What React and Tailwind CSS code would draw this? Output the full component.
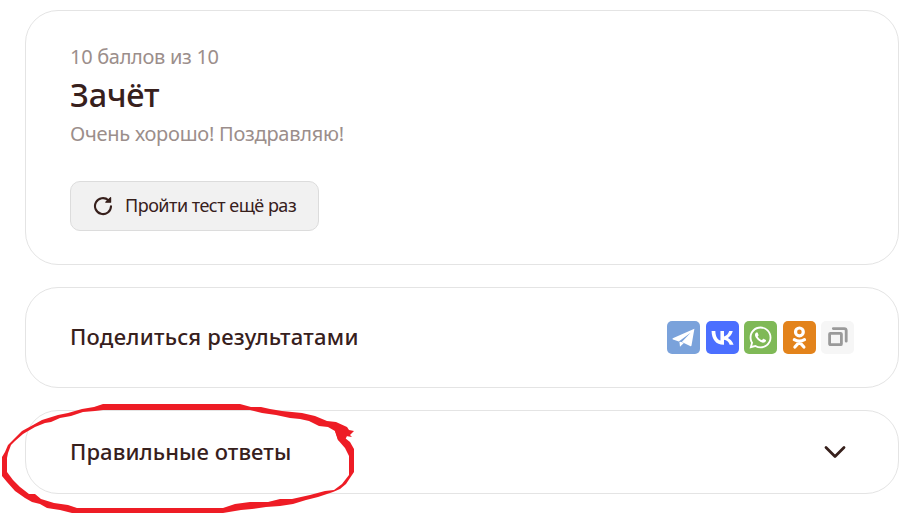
import React from 'react';
import { FaWhatsapp } from 'react-icons/fa';

const TelegramIcon = () => (
    <svg width="33" height="33" viewBox="0 0 33 33" fill="currentColor">
        <path d="M27.4 7.8 5.8 17.2q-.9.8.2 1.3l5.8 2L23.6 11.8l-8.8 9.2 8.8 4.2q.7.2.9-.6z" />
        <path d="M12.4 20.8 13 25.7l3.8-3.6-2.4-1.2z" />
    </svg>
);

const VkIcon = () => (
    <svg width="33" height="33" viewBox="0 0 24 24" fill="currentColor">
        <path d="M12.77 17.29c-5.47 0-8.59-3.75-8.72-9.99h2.74c.09 4.58 2.11 6.52 3.71 6.92V7.3h2.58v3.95c1.58-.17 3.24-1.97 3.8-3.95h2.58c-.43 2.44-2.23 4.24-3.51 4.98 1.28.6 3.33 2.17 4.11 5.01h-2.84c-.61-1.9-2.13-3.37-4.14-3.57v3.57h-.31z" />
    </svg>
);

const OkIcon = () => (
    <svg width="33" height="33" viewBox="0 0 33 33" fill="none" stroke="currentColor" strokeWidth="3.2" strokeLinecap="round">
        <circle cx="16.4" cy="10.9" r="3.9" />
        <path d="M11.3 18.7q5.1 3 10.2 0M16.4 21l-4.5 5M16.4 21l4.5 5" />
    </svg>
);

const CopyIcon = () => (
    <svg width="33" height="33" viewBox="0 0 33 33" fill="none" stroke="currentColor" strokeWidth="2.8">
        <rect x="8.6" y="12.3" width="11.8" height="11.4" rx="0.8" />
        <path d="M12.3 7.6h10.9a2 2 0 0 1 2 2v10.6" strokeLinecap="round" />
    </svg>
);

const RetryIcon = () => (
    <svg width="20" height="20" viewBox="0 0 20 20" fill="none" stroke="currentColor" strokeWidth="2.1">
        <path d="M18 10.2a8 8 0 1 1-2.6-6" strokeLinecap="round" />
        <path d="M17.6 1.6v4.6h-4.8z" fill="currentColor" strokeWidth="1.2" strokeLinejoin="round" />
    </svg>
);

const shareLinks = [
    { name: 'Telegram', color: 'bg-[#7aa2db]', icon: <TelegramIcon /> },
    { name: 'ВКонтакте', color: 'bg-[#4b6fff]', icon: <VkIcon /> },
    { name: 'WhatsApp', color: 'bg-[#7fb957]', icon: <FaWhatsapp size={25} /> },
    { name: 'Одноклассники', color: 'bg-[#e3831b]', icon: <OkIcon /> },
];

const Card = ({ className, children }) => (
    <section className={`w-[874px] rounded-[33px] border border-[#e4e4e4] bg-white px-11 ${className}`}>
        {children}
    </section>
);

// Hand-drawn red marker around the answers heading
const MarkerCircle = () => (
    <svg className="pointer-events-none absolute left-0 top-0" width="923" height="524" viewBox="0 0 923 524">
        <path
            fill="#ee1c25"
            fillRule="evenodd"
            d="M103 404H240L251 407L261 407L270 409L282 411L302 413L315 416L327 421L336 422L347 427L349 430L354 431L350 435L352 437L346 436L343 434L345 438L350 442L354 449V472L350 478L346 484L340 489L333 492L318 497L306 500L293 504L280 506L266 507L252 509L241 510L223 513H72L60 510L47 508L40 504L32 502L25 498L15 491L7 482L2 476V457L5 452L8 445L14 439L22 431L33 425L42 420L58 415L68 413L82 409L94 407Z
            M103 410L95 411L83 412L71 416L60 418L51 422L45 423L35 427L23 434L15 441L11 445L8 453L7 458V472L13 480L20 487L29 494L35 494L41 499L54 503L68 505L77 508H223L235 504L250 502L268 502L280 499L292 499L310 495L325 491L334 490L342 484L349 475V456L345 448L338 440L335 431L328 427L319 426L309 421L300 419L290 418L276 415L262 413L250 410Z"
        />
        <path fill="#ee1c25" d="M334 428l8-3 5 11-3 6-6-2z" />
    </svg>
);

const App = () => {
    return (
        <main className="relative flex h-[524px] w-[923px] flex-col gap-[22px] overflow-hidden bg-white pl-[25px] pt-[10px] font-['Noto_Sans',sans-serif] text-[#37201c]">
            <Card className="h-[255px] pt-[32px]">
                <p className="text-[20px] leading-[28px] tracking-[-0.3px] text-[#9b8e8b]">10 баллов из 10</p>
                <h1 className="mt-[4px] text-[32.5px] font-medium leading-[40px] tracking-[-0.2px]">Зачёт</h1>
                <p className="mt-[5px] text-[20px] leading-[28px] tracking-[-0.25px] text-[#9b8e8b]">Очень хорошо! Поздравляю!</p>
                <button className="mt-[33px] flex h-[50px] w-[249px] items-center gap-3 rounded-[10px] border border-[#dcdcdc] bg-[#f1f1f1] pl-[22px] text-[18px] tracking-[-0.5px]">
                    <RetryIcon />
                    <span className="whitespace-nowrap pb-px">Пройти тест ещё раз</span>
                </button>
            </Card>

            <Card className="flex h-[101px] items-center justify-between">
                <h2 className="pb-0.5 text-[22px] font-medium tracking-[0.25px]">Поделиться результатами</h2>
                <div className="flex gap-[5.5px] text-white">
                    {shareLinks.map((link) => (
                        <button
                            key={link.name}
                            aria-label={link.name}
                            className={`flex size-[33px] items-center justify-center rounded-[5px] ${link.color}`}
                        >
                            {link.icon}
                        </button>
                    ))}
                    <button aria-label="Скопировать ссылку" className="size-[33px] rounded-[5px] bg-[#f6f6f6] text-[#9a9a9a]">
                        <CopyIcon />
                    </button>
                </div>
            </Card>

            <Card className="flex h-[84px] items-center justify-between">
                <h2 className="pb-0.5 text-[22px] font-medium tracking-[0.1px]">Правильные ответы</h2>
                <svg className="mr-2" width="22" height="14" viewBox="0 0 22 14" fill="none" stroke="currentColor" strokeWidth="2.8" strokeLinecap="round" strokeLinejoin="round">
                    <path d="M2 2.5l9 9 9-9" />
                </svg>
            </Card>

            <MarkerCircle />
        </main>
    );
};

export default App;
